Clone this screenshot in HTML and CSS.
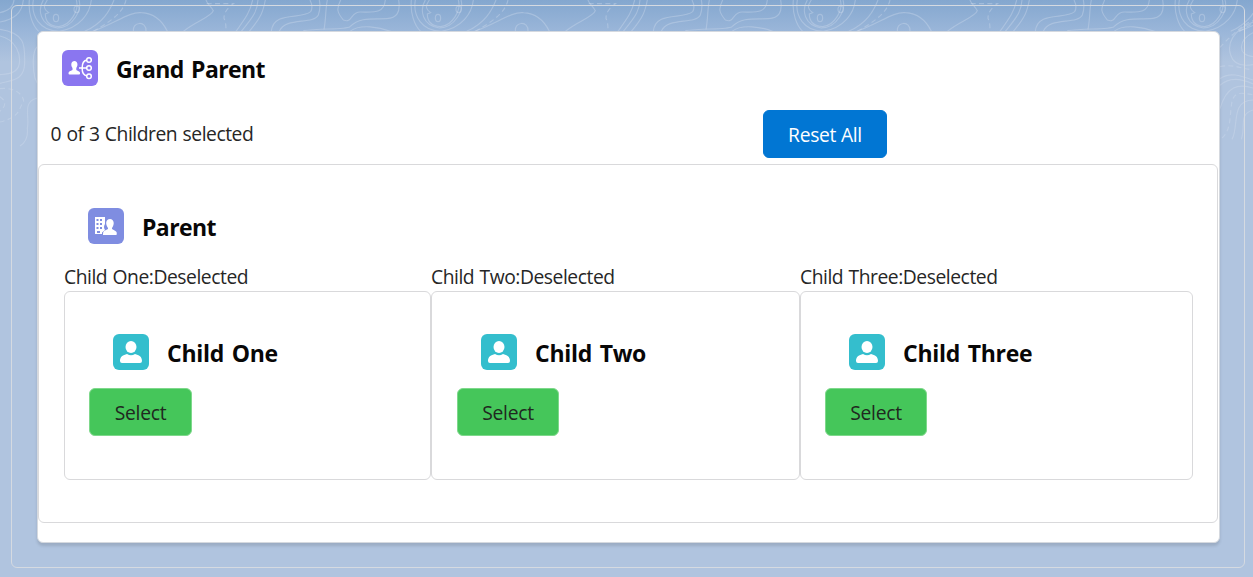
FILE: index.html
```html
<!DOCTYPE html>
<html lang="en">
<head>
<meta charset="utf-8">
<title>Grand Parent</title>
<link rel="stylesheet" href="styles.css">
</head>
<body>
<svg class="topography" width="1253" height="160" viewBox="0 0 3759 480" aria-hidden="true">
  <defs>
    <g id="contours">
      <path d="M88 0C84 40 98 78 116 94M278 94C345 70 390 34 424 38C462 40 488 65 502 94"/>
      <path d="M130 0C112 30 120 76 172 84C220 82 246 30 237 0M142 0C128 20 132 28 146 38L136 42C136 65 150 78 176 80C212 76 238 30 229 0M100 0C92 48 120 94 178 94C240 84 270 40 274 0M254 94C310 70 330 30 342 0"/>
      <ellipse cx="168" cy="54" rx="8" ry="11"/><ellipse cx="230" cy="28" rx="8" ry="10"/>
      <path d="M400 94C396 65 440 60 438 94"/>
      <path stroke-dasharray="15 10" d="M280 94C340 60 370 35 378 0M620 11H700C678 28 672 40 672 55Q680 74 677 94"/>
      <path d="M550 94C590 62 635 50 640 32C634 20 620 10 618 0M708 94C740 50 750 35 758 0M724 94C765 45 772 30 774 0M748 94C785 50 790 32 796 0"/>
      <path d="M814 94C820 32 903 60 932 35C938 25 936 12 930 0M838 94C855 50 940 75 955 45C962 25 960 10 958 0M972 88C978 60 976 30 982 0"/>
      <path d="M1022 0C1008 28 1012 38 1030 60C1058 72 1050 35 1082 36C1120 36 1152 42 1156 0M1196 0C1202 38 1190 54 1160 56C1120 58 1080 50 1050 80C1035 90 960 84 910 92M1050 94C1080 70 1140 82 1172 94"/>
    </g>
  </defs>
  <g class="contour-lines">
    <use href="#contours"/>
    <use href="#contours" x="1146"/>
    <use href="#contours" x="2292"/>
    <use href="#contours" x="3438"/>
    <path d="M0 88C80 100 74 140 74 190C72 242 38 240 0 250M0 108C50 120 62 165 58 190C54 222 20 222 0 224M70 0C66 42 40 58 0 66M42 0Q40 30 0 38M112 140C96 155 98 205 105 235L112 250M112 294C65 305 90 350 82 385Q86 422 60 438"/>
    <path stroke-dasharray="15 10" d="M0 266C52 260 75 292 70 308C54 326 64 350 0 366M0 290Q28 310 0 334"/>
    <path d="M3759 66C3700 90 3680 130 3692 165C3702 200 3735 198 3759 194M3759 98C3718 118 3708 165 3759 170M3660 236C3690 214 3725 228 3759 240M3660 256C3688 230 3725 236 3759 252M3660 326C3680 258 3715 250 3759 264M3696 418C3718 380 3690 302 3759 300M3724 418C3738 375 3715 344 3759 330"/>
    <path stroke-dasharray="15 10" d="M3660 142C3685 115 3730 70 3759 62M3660 200C3700 192 3716 204 3759 210M3666 414C3712 375 3670 275 3728 280L3759 284"/>
  </g>
</svg>
<main class="frame">
  <section class="card">
    <header class="heading">
      <svg class="icon hierarchy" viewBox="0 0 36 36"><path fill="#fff" d="M12.500 11C9 11 8.500 15.500 10.500 18V20L7.300 21.600Q6.500 22 6.500 23.500Q6.500 24.500 7.500 24.500H17.300Q18.300 24.500 18 22.800Q17.900 22 17 21.500L14.300 20V18C16.500 15 15.500 11 12.500 11Z"/><g fill="none" stroke="#fff" stroke-width="1.500"><path d="M17 18H24.500M25 10C18.500 11 18.500 25 25 26"/><circle cx="27" cy="10" r="2.300"/><circle cx="27" cy="18" r="2.300"/><circle cx="27" cy="26.300" r="2.300"/></g></svg>
      <h1>Grand Parent</h1>
    </header>
    <div class="summary">
      <p class="count">0 of 3 Children selected</p>
      <button class="btn reset">Reset All</button>
    </div>
    <section class="parent">
      <header class="heading">
        <svg class="icon household" viewBox="0 0 36 36"><path fill="#fff" fill-rule="evenodd" d="M7 9H17V16Q15 19 17 22L14 24.500V26H7ZM8.500 11V13H10.500V11ZM12 11V13H14V11ZM8.500 15V17H10.500V15ZM12 15V17H14V15ZM8.500 19V21H10.500V19ZM12 19V21H14V19ZM9 23V25H12V23Z"/><path fill="#fff" d="M22 11C17.500 11 17.200 16.500 20 20V21L16 23Q14.800 24 15 27H28.500Q29.500 23.800 27 22.800L24 21V20C26.800 16.500 26.200 11 22 11Z"/></svg>
        <h2>Parent</h2>
      </header>
      <div class="children">
        <article class="child">
          <p>Child One:Deselected</p>
          <div class="box">
            <header class="heading"><svg class="icon user" viewBox="0 0 36 36"><ellipse cx="18" cy="13" rx="5.500" ry="6" fill="#fff"/><path fill="#fff" d="M14 20Q18 22.500 22 20C26 21 29 22.500 29 27Q29 29 27 29H9Q7 29 7 27C7 22.500 10 21 14 20Z"/></svg><h3>Child One</h3></header>
            <button class="btn select">Select</button>
          </div>
        </article>
        <article class="child">
          <p>Child Two:Deselected</p>
          <div class="box">
            <header class="heading"><svg class="icon user" viewBox="0 0 36 36"><ellipse cx="18" cy="13" rx="5.500" ry="6" fill="#fff"/><path fill="#fff" d="M14 20Q18 22.500 22 20C26 21 29 22.500 29 27Q29 29 27 29H9Q7 29 7 27C7 22.500 10 21 14 20Z"/></svg><h3>Child Two</h3></header>
            <button class="btn select">Select</button>
          </div>
        </article>
        <article class="child">
          <p>Child Three:Deselected</p>
          <div class="box">
            <header class="heading"><svg class="icon user" viewBox="0 0 36 36"><ellipse cx="18" cy="13" rx="5.500" ry="6" fill="#fff"/><path fill="#fff" d="M14 20Q18 22.500 22 20C26 21 29 22.500 29 27Q29 29 27 29H9Q7 29 7 27C7 22.500 10 21 14 20Z"/></svg><h3>Child Three</h3></header>
            <button class="btn select">Select</button>
          </div>
        </article>
      </div>
    </section>
  </section>
</main>
</body>
</html>
```
FILE: styles.css
```css
* { box-sizing: border-box; }
body {
  margin: 0;
  height: 577px;
  padding: 5px 8px 9px 11px;
  overflow: hidden;
  background: linear-gradient(#84a7cf 0, #9ab6d9 31px, #b0c4df 62px) #b0c4df;
  font: 400 19.3px/29px "Open Sans", "Noto Sans", sans-serif;
  color: #262626;
}
h1, h2, h3, p { margin: 0; }
.topography { position: absolute; top: 0; left: 0; }
.contour-lines { fill: none; stroke: #d4dfef; stroke-opacity: .36; stroke-width: 3.5; }
.frame { position: relative; height: 563px; padding: 25px; border: 1px solid #d5dae1; border-radius: 6px; }
.card {
  height: 512px;
  width: 1183px;
  padding-top: 18px;
  background: #fff;
  border: 1px solid #d5d9df;
  border-radius: 6px;
  box-shadow: 0 3px 3px rgba(0,0,0,.12);
}
.heading { display: flex; align-items: center; gap: 18px; height: 36px; padding-left: 24px; }
.heading h1, .heading h2, .heading h3 { font-size: 23px; line-height: 36px; font-weight: 700; letter-spacing: -.6px; word-spacing: 2px; color: #080707; padding-top: 2px; }
.heading h3 { letter-spacing: -.28px; }
.icon { width: 36px; height: 36px; border-radius: 6px; }
.hierarchy { background: #8a76f0; }
.household { background: #7f8de1; }
.user { background: #34becd; }
.summary { display: flex; justify-content: space-between; align-items: center; height: 48px; margin-top: 24px; padding: 0 332px 0 12.5px; }
.count { padding-bottom: 2px; }
.count, .child p { letter-spacing: -.46px; word-spacing: .8px; }
.btn { height: 48px; padding: 0; border: 1px solid; border-radius: 6px; font: inherit; letter-spacing: -.3px; }
.reset { width: 124px; background: #0176d3; border-color: #0176d3; color: #fff; }
.select { width: 102px; margin-top: 18px; background: #45c65a; border-color: #7ed88b; color: #202820; }
.parent { width: 1180px; height: 359px; margin-top: 6px; padding: 43px 24px 0 25px; border: 1px solid #d9d9db; border-radius: 6px; }
.children { display: grid; grid-template-columns: 367px 369px 393px; margin-top: 18px; }
.child p { height: 29px; white-space: nowrap; }
.box { height: 189px; padding: 42px 24px 0; border: 1px solid #d9d9db; border-radius: 6px; }
.child:first-child .select { width: 103px; }
.child:nth-child(2) .box { padding-left: 25px; }
```
